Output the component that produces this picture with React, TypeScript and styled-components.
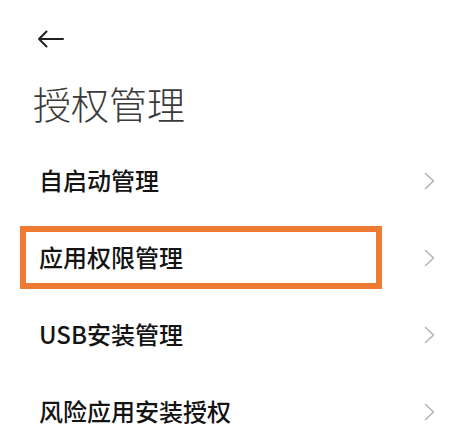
import React from "react";
import styled, { createGlobalStyle } from "styled-components";

const Global = createGlobalStyle`
  html, body { margin: 0; padding: 0; background: #ffffff; }
  body { font-family: "Noto Sans CJK SC", "Noto Sans", sans-serif; }
`;

const Page = styled.div`
  width: 475px;
  height: 447px;
  background: #ffffff;
  overflow: hidden;
`;

const Header = styled.div`
  height: 78px;
  display: flex;
  align-items: center;
  padding-left: 37px;
  box-sizing: border-box;
`;

const Title = styled.h1`
  margin: 0;
  padding-left: 33px;
  font-size: 38px;
  line-height: 50px;
  font-weight: 300;
  color: #3a3a3a;
  letter-spacing: 0;
`;

const List = styled.div`
  margin-top: 14px;
  display: flex;
  flex-direction: column;
`;

const Row = styled.div`
  height: 77px;
  display: flex;
  align-items: center;
  padding: 0 40px 0 20px;
  box-sizing: border-box;
`;

const Label = styled.div<{ $highlight?: boolean }>`
  width: 362px;
  height: 63px;
  box-sizing: border-box;
  border: 6px solid ${(p) => (p.$highlight ? "#ef7a34" : "transparent")};
  padding: 0 0 3px 13px;
  display: flex;
  align-items: center;
  font-size: 24px;
  font-weight: 500;
  color: #141414;
`;

const Chevron = styled.svg`
  margin-left: auto;
  width: 11px;
  height: 18px;
`;

const items = [
  { label: "自启动管理" },
  { label: "应用权限管理", highlight: true },
  { label: "USB安装管理" },
  { label: "风险应用安装授权" },
];

export default function App() {
  return (
    <Page>
      <Global />
      <Header>
        <svg width="27" height="18" viewBox="0 0 27 18" fill="none">
          <path d="M26 9H2M9.5 1.5L2 9l7.5 7.5" stroke="#222" strokeWidth="2" strokeLinecap="round" strokeLinejoin="round" />
        </svg>
      </Header>
      <Title>授权管理</Title>
      <List>
        {items.map((it) => (
          <Row key={it.label}>
            <Label $highlight={it.highlight}>{it.label}</Label>
            <Chevron viewBox="0 0 11 18" fill="none">
              <path d="M1.5 1.5L9.5 9l-8 7.5" stroke="#b4b4b4" strokeWidth="1.6" strokeLinecap="round" strokeLinejoin="round" />
            </Chevron>
          </Row>
        ))}
      </List>
    </Page>
  );
}
